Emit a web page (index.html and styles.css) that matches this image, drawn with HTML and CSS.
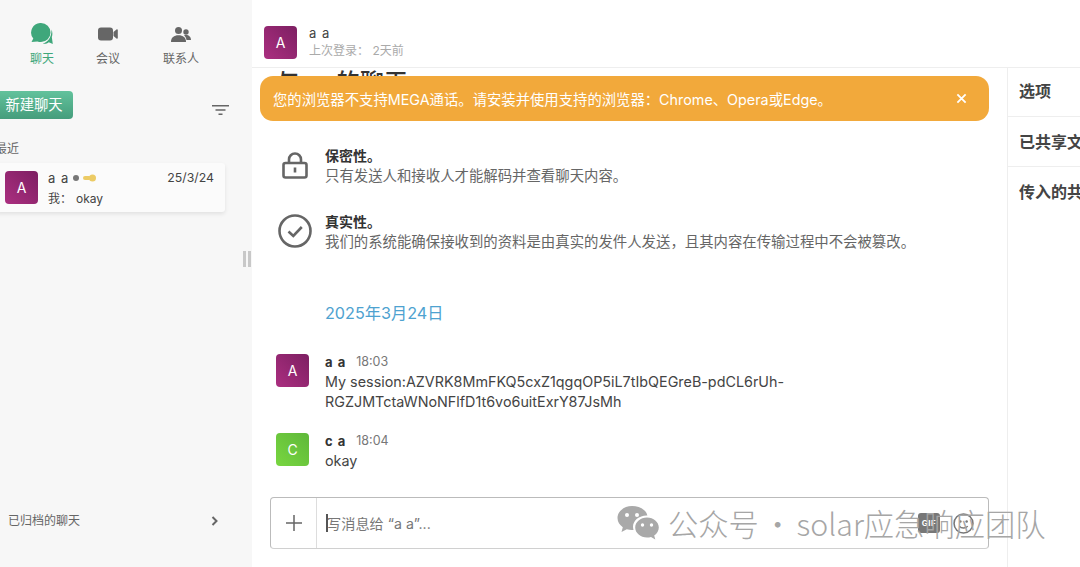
FILE: index.html
```html
<!DOCTYPE html>
<html lang="zh">
<head>
<meta charset="utf-8">
<title>MEGA 聊天</title>
<link rel="stylesheet" href="styles.css">
</head>
<body>
<div class="app">
  <aside class="sidebar">
    <nav class="tabs">
      <div class="tab tab-active">
        <svg class="tab-icon icon-chat" viewBox="0 0 22 22"><path fill="#3fa77b" d="M10 0a9.500 9.500 0 0 1 0 19c-1.500 0-2.500-.2-3.500-.6L.5 19l1.800-3.500A9.500 9.500 0 0 1 10 0z"/><path fill="#3fa77b" d="M20.500 6.500c1.300 3 1 5.500.3 7.500l1 7-4-1.800c-2 1.500-4 1.700-6 1.300 4.500-1 9-6 8.700-14z"/></svg>
        <span>聊天</span>
      </div>
      <div class="tab">
        <svg class="tab-icon icon-video" viewBox="0 0 20 14"><rect x="0" y="0.500" width="15" height="13" rx="3" fill="#666"/><path fill="#666" d="M15.500 5l3-2.500c.5-.4 1.300-.2 1.300.6v7.800c0 .8-.8 1-1.300.6l-3-2.500z"/></svg>
        <span>会议</span>
      </div>
      <div class="tab">
        <svg class="tab-icon icon-people" viewBox="0 0 20 15"><circle cx="7.500" cy="3.500" r="3.500" fill="#666"/><circle cx="15" cy="5" r="2.700" fill="#666"/><path fill="#666" d="M0 15c0-4.500 3-6.700 7.500-6.700S15 10.500 15 15z"/><path fill="#666" d="M13 8.300c.7-.2 1.300-.3 2-.3 3 0 5 2 5 5h-4.500c-.4-2-1.100-3.500-2.500-4.700z"/></svg>
        <span>联系人</span>
      </div>
    </nav>
    <div class="actions">
      <button class="new-chat">新建聊天</button>
      <svg class="filter" viewBox="0 0 17 10"><path d="M0 .8h17M3.500 5h10M6.500 9.200h4" stroke="#666" stroke-width="1.500" fill="none"/></svg>
    </div>
    <div class="section-label">最近</div>
    <div class="chat-item">
      <div class="avatar avatar-purple">A</div>
      <div class="chat-body">
        <div class="chat-top">
          <span class="chat-name">a a</span>
          <i class="status-dot"></i>
          <svg class="key" viewBox="0 0 13 8"><circle cx="9.500" cy="4" r="3.500" fill="#eccb65"/><rect x="0" y="2" width="8" height="4" rx="2" fill="#eccb65"/></svg>
          <span class="chat-date">25/3/24</span>
        </div>
        <div class="chat-last"><span>我：</span><span>okay</span></div>
      </div>
    </div>
    <div class="archived">
      <span>已归档的聊天</span>
      <svg class="chev" viewBox="0 0 8 10"><path d="M1.500 1l4 4-4 4" stroke="#666" stroke-width="2" fill="none"/></svg>
    </div>
    <div class="grip"><i></i><i></i></div>
  </aside>

  <main class="main">
    <header class="head">
      <div class="avatar avatar-purple">A</div>
      <div class="head-text">
        <div class="head-name">a a</div>
        <div class="head-seen">上次登录： 2天前</div>
      </div>
    </header>
    <div class="body">
      <div class="columns">
        <div class="conv">
          <h1 class="conv-title">与 a a 的聊天</h1>
          <div class="banner">
            <span>您的浏览器不支持MEGA通话。请安装并使用支持的浏览器：Chrome、Opera或Edge。</span>
            <svg class="banner-x" viewBox="0 0 12 12"><path d="M1.500 1.500l9 9M10.500 1.500l-9 9" stroke="#fff" stroke-width="2" fill="none"/></svg>
          </div>
          <div class="info">
            <svg class="info-icon lock" viewBox="0 0 26 28"><path d="M7 13V8.500a6 6 0 0 1 12 0V13" stroke="#666" stroke-width="2.600" fill="none"/><rect x="1.500" y="12" width="23" height="14.500" rx="2" stroke="#666" stroke-width="2.600" fill="none"/><rect x="11.700" y="16.500" width="2.600" height="5" fill="#666"/></svg>
            <div class="info-text"><b>保密性。</b><p>只有发送人和接收人才能解码并查看聊天内容。</p></div>
          </div>
          <div class="info">
            <svg class="info-icon" viewBox="0 0 34 34"><circle cx="17" cy="17" r="15.500" stroke="#666" stroke-width="2.600" fill="none"/><path d="M10.500 17.500l4.800 4.500 8.500-9" stroke="#666" stroke-width="2.600" fill="none"/></svg>
            <div class="info-text"><b>真实性。</b><p>我们的系统能确保接收到的资料是由真实的发件人发送，且其内容在传输过程中不会被篡改。</p></div>
          </div>
          <div class="date-sep">2025年3月24日</div>
          <div class="msg">
            <div class="avatar avatar-purple">A</div>
            <div class="msg-body">
              <div class="msg-meta"><b>a a</b><span>18:03</span></div>
              <div class="msg-text">My session:AZVRK8MmFKQ5cxZ1qgqOP5iL7tIbQEGreB-pdCL6rUh-<br>RGZJMTctaWNoNFlfD1t6vo6uitExrY87JsMh</div>
            </div>
          </div>
          <div class="msg">
            <div class="avatar avatar-green">C</div>
            <div class="msg-body">
              <div class="msg-meta"><b>c a</b><span>18:04</span></div>
              <div class="msg-text">okay</div>
            </div>
          </div>
          <div class="composer">
            <div class="plus"><svg viewBox="0 0 16 16"><path d="M8 0v16M0 8h16" stroke="#666" stroke-width="1.500"/></svg></div>
            <div class="input"><i class="caret"></i><span>写消息给 “a a”...</span></div>
            <div class="gif">GIF</div>
            <svg class="emoji" viewBox="0 0 20 20"><circle cx="10" cy="10" r="9" fill="#fff" stroke="#777" stroke-width="1.500"/><circle cx="7" cy="8" r="1.200" fill="#777"/><circle cx="13" cy="8" r="1.200" fill="#777"/><path d="M6 12.500c2 2.500 6 2.500 8 0" stroke="#777" stroke-width="1.400" fill="none"/></svg>
          </div>
        </div>
        <aside class="panel">
          <div class="panel-row panel-first">选项</div>
          <div class="panel-row">已共享文件</div>
          <div class="panel-row panel-last">传入的共享</div>
        </aside>
      </div>
    </div>
  </main>
</div>
<div class="watermark">
  <svg class="wm-logo" viewBox="0 0 42 34"><path fill="#a9a9a9" d="M15 0C7 0 .5 5.400.5 12c0 3.800 2.100 7 5.300 9.200L4.500 26l5.300-2.800c1.600.5 3.400.8 5.200.8.500 0 1 0 1.500-.1-.3-1-.5-2-.5-3.100 0-6.400 6-11.400 13.500-11.400h.9C28.900 3.700 22.600 0 15 0z"/><path fill="#a9a9a9" d="M41.800 21.500c0-5.500-5.300-10-11.800-10s-11.800 4.500-11.800 10 5.300 10 11.800 10c1.400 0 2.800-.2 4-.6l4.300 2.600-1.100-4c2.800-1.900 4.600-4.800 4.600-8z"/><circle cx="10" cy="9" r="2" fill="#fff"/><circle cx="20" cy="9" r="2" fill="#fff"/><circle cx="25.500" cy="19" r="1.700" fill="#fff"/><circle cx="34.500" cy="19" r="1.700" fill="#fff"/></svg>
  <span>公众号 · solar应急响应团队</span>
</div>
</body>
</html>
```

FILE: styles.css
```css
* { box-sizing: border-box; }
html, body { margin: 0; height: 100%; overflow: hidden; background: #fff; }
body { font-family: Inter, "Noto Sans CJK SC", sans-serif; color: #333; position: relative; }
.app { display: flex; height: 567px; width: 1080px; overflow: hidden; }

.sidebar { width: 252px; flex: none; background: #f7f7f7; display: flex; flex-direction: column; position: relative; }
.tabs { display: flex; padding: 22px 0 0 27px; height: 91px; }
.tab { display: flex; flex-direction: column; align-items: center; font-size: 12px; color: #666; width: 66px; line-height: 16px; }
.tab span { margin-top: 5px; }
.tab-icon { display: block; width: 24px; height: 24px; }
.icon-chat { width: 22px; height: 22px; margin: 1px 0; }
.icon-video { width: 20px; height: 14px; margin: 5px 0; }
.icon-people { width: 20px; height: 15px; margin: 5px 0 4px; }
.tab-active { color: #3fa77b; width: 30px; }
.tab:nth-child(2) { margin-left: 18px; width: 66px; margin-right: 21px; }
.tab:nth-child(3) { width: 38px; }

.actions { display: flex; align-items: center; justify-content: space-between; height: 28px; padding-right: 23px; }
.new-chat { border: 0; margin: 0 0 0 -8px; width: 81px; height: 28px; border-radius: 4px; background: linear-gradient(180deg, #62c29c 0%, #459d7c 100%); color: #fff; font: 14.3px/28px Inter, "Noto Sans CJK SC", sans-serif; padding: 0 0 0 3px; }
.filter { width: 17px; height: 10px; margin-top: 9px; }

.section-label { font-size: 12px; color: #666; line-height: 16px; margin: 22px 0 0 -5px; height: 16px; }
.chat-item { margin: 6px 0 0 -4px; width: 229px; height: 49px; background: #fbfbfb; border-radius: 3px; box-shadow: 0 2px 4px rgba(0,0,0,.09); display: flex; align-items: center; padding-left: 9px; }
.avatar { width: 33px; height: 33px; flex: none; border-radius: 4px; color: #fff; font-size: 14px; display: flex; align-items: center; justify-content: center; }
.avatar-purple { background: linear-gradient(45deg, #ab2f80, #7d1f62); }
.avatar-green { background: linear-gradient(45deg, #78d640, #5fb83a); }
.chat-body { flex: 1; margin-left: 10px; padding-right: 11px; }
.chat-top { display: flex; align-items: center; font-size: 13px; line-height: 18px; color: #444; }
.chat-name { letter-spacing: 1px; }
.status-dot { width: 6px; height: 6px; border-radius: 50%; background: #777; margin-left: 4px; }
.key { width: 13px; height: 8px; margin-left: 4px; }
.chat-date { margin-left: auto; font-size: 12.3px; }
.chat-last { font-size: 12px; line-height: 16px; color: #444; margin-top: 4px; display: flex; gap: 4px; }
.archived { margin-top: auto; margin-bottom: 38px; padding: 0 33px 0 8px; display: flex; align-items: center; justify-content: space-between; font-size: 12px; color: #666; line-height: 16px; }
.chev { width: 8px; height: 10px; }
.grip { position: absolute; left: 243px; top: 251px; display: flex; gap: 2px; }
.grip i { width: 3px; height: 16px; background: #c8c8c8; }

.main { flex: 1; min-width: 0; display: flex; flex-direction: column; }
.head { height: 68px; border-bottom: 1px solid #eee; padding: 26px 0 0 12px; display: flex; flex: none; }
.head-text { margin-left: 12px; margin-top: -1px; }
.head-name { font-size: 13px; line-height: 16px; letter-spacing: 1px; color: #444; }
.head-seen { font-size: 12px; line-height: 16px; color: #aaa; margin-top: 2px; }
.body { flex: 1; min-height: 0; overflow: hidden; }
.columns { display: flex; height: 100%; }
.conv { width: 756px; flex: none; border-right: 1px solid #eee; position: relative; padding-left: 24px; }
.conv-title { margin: -1px 0 0; font-weight: 500; font-size: 24px; line-height: 32px; height: 34px; word-spacing: -3.500px; color: #333; white-space: nowrap; }
.banner { position: absolute; left: 8px; top: 8px; width: 729px; height: 45px; background: #f2a93b; color: #fff; border-radius: 13px; display: flex; align-items: center; justify-content: space-between; padding: 0 22px 0 13px; font-size: 14.35px; }
.banner-x { width: 11px; height: 11px; }

.info { display: flex; align-items: flex-start; min-height: 36px; }
.info + .info { margin-top: 28px; }
.conv-title + .banner + .info { margin-top: 47px; }
.info-icon { width: 34px; height: 34px; flex: none; margin: 0 13px 0 2px; }
.lock { width: 26px; height: 28px; margin: 3px 17px 0 6px; }
.info-text { font-size: 14.4px; line-height: 20px; color: #666; margin-top: -2px; }
.info-text b { display: block; color: #333; font-size: 14px; font-weight: 700; }
.info-text p { margin: 0; }

.date-sep { margin: 50px 0 0 49px; font-size: 16.2px; line-height: 22px; color: #4ea2d0; }
.msg { display: flex; margin-top: 30px; }
.msg + .msg { margin-top: 21px; }
.msg-body { margin-left: 16px; }
.msg-meta { display: flex; align-items: center; gap: 10px; font-size: 13px; line-height: 16px; }
.msg-meta b { color: #333; letter-spacing: 1px; }
.msg-meta span { color: #777; font-size: 12.5px; }
.msg-text { font-size: 14.35px; line-height: 20px; color: #444; margin-top: 2px; }

.composer { position: absolute; left: 18px; top: 429px; width: 719px; height: 52px; border: 1px solid #bbb; border-bottom-color: #d0d0d0; border-radius: 4px; display: flex; align-items: center; background: #fff; }
.plus { width: 46px; height: 100%; border-right: 1px solid #ddd; display: flex; align-items: center; justify-content: center; flex: none; }
.plus svg { width: 16px; height: 16px; }
.input { flex: 1; display: flex; align-items: center; font-size: 14.2px; color: #777; padding-left: 9px; }
.caret { width: 2px; height: 18px; background: #555; margin-right: -1px; }
.gif { width: 22px; height: 20px; border-radius: 3px; background: #777; color: #fff; font-size: 8px; font-weight: 700; display: flex; align-items: center; justify-content: center; letter-spacing: .5px; }
.emoji { width: 21px; height: 21px; margin: 0 14px 0 13px; }

.panel { flex: 1; min-width: 0; overflow: hidden; }
.panel-row { height: 50px; border-bottom: 1px solid #eee; padding: 14px 0 0 11px; font-size: 16px; line-height: 22px; font-weight: 700; color: #444; white-space: nowrap; }
.panel-first { height: 49px; padding-top: 12px; }
.panel-last { border-bottom: 0; }

.watermark { position: absolute; left: 617px; top: 503px; display: flex; align-items: center; gap: 9px; color: #a6a6a6; font-size: 30.3px; font-weight: 300; line-height: 40px; font-family: "Noto Sans CJK SC", sans-serif; white-space: nowrap; }
.wm-logo { width: 42px; height: 34px; }
.watermark span { word-spacing: -3px; }
```
